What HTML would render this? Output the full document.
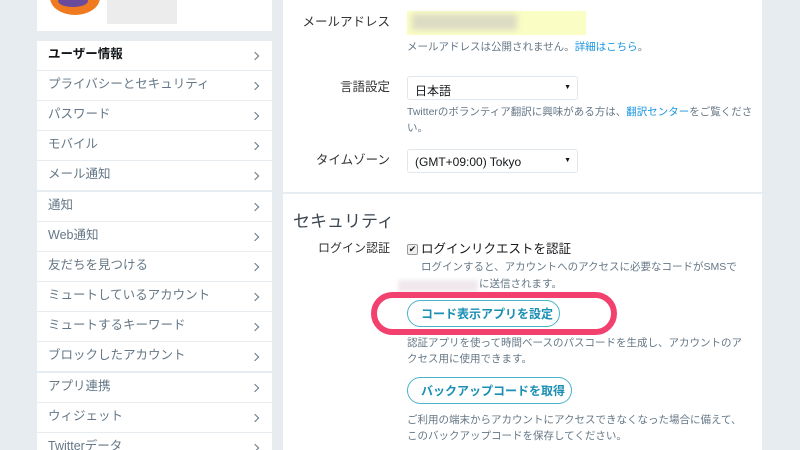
<!DOCTYPE html>
<html><head><meta charset="utf-8"><style>
*{margin:0;padding:0;box-sizing:border-box}
html,body{width:800px;height:450px;overflow:hidden}
body{background:#e6ecf0;font-family:"Liberation Sans","Noto Sans CJK JP",sans-serif;position:relative;color:#14171a}
.abs{position:absolute}
.card{background:#fff}
.row{position:absolute;left:37px;width:235px;height:29px;background:#fff;font-size:12.5px;line-height:16px;color:#657786;padding:5px 0 0 11px}
.row b{color:#14171a}
.row:after{content:"";position:absolute;right:14px;top:12px;width:5px;height:5px;border-right:1.5px solid #657786;border-top:1.5px solid #657786;transform:rotate(45deg)}
.lbl{position:absolute;font-size:12.5px;line-height:16px;color:#333;text-align:right;right:410px}
.help{position:absolute;left:407px;font-size:10.5px;color:#657786;line-height:16px}
a{color:#1b95e0;text-decoration:none}
.sel{position:absolute;left:407px;width:171px;height:24px;border:1px solid #e1e8ed;border-radius:3px;background:#fff;font-size:12px;padding:5px 0 0 7px}
.sel:after{content:"▼";position:absolute;right:6px;top:7px;font-size:7px}
.btn{position:absolute;left:407px;height:27px;border:1px solid #4ab3c8;border-radius:14px;color:#1a8fb3;font-weight:bold;font-size:12px;line-height:14px;padding:6px 0 0 13px;background:#fff}
</style></head><body>
<div class="abs card" style="left:37px;top:0;width:235px;height:31px"></div>
<div class="abs" style="left:50px;top:-20px;width:50px;height:35px;border-radius:50%;background:#f07a20"></div>
<div class="abs" style="left:58px;top:-5px;width:30px;height:12px;background:#6a4a9a;border-radius:50%"></div>
<div class="abs" style="left:107px;top:0;width:70px;height:24px;background:#ececec"></div>
<div class="row" style="top:41px"><b>ユーザー情報</b></div>
<div class="row" style="top:71px">プライバシーとセキュリティ</div>
<div class="row" style="top:101px">パスワード</div>
<div class="row" style="top:131px">モバイル</div>
<div class="row" style="top:161px">メール通知</div>
<div class="row" style="top:192px">通知</div>
<div class="row" style="top:222px">Web通知</div>
<div class="row" style="top:252px">友だちを見つける</div>
<div class="row" style="top:282px">ミュートしているアカウント</div>
<div class="row" style="top:312px">ミュートするキーワード</div>
<div class="row" style="top:342px">ブロックしたアカウント</div>
<div class="row" style="top:373px">アプリ連携</div>
<div class="row" style="top:403px">ウィジェット</div>
<div class="row" style="top:433px">Twitterデータ</div>

<div class="abs card" style="left:283px;top:0;width:479px;height:192px"></div>
<div class="abs card" style="left:283px;top:194px;width:479px;height:256px"></div>
<div class="lbl" style="top:14px">メールアドレス</div>
<div class="abs" style="left:407px;top:11px;width:179px;height:24px;background:#fafdc4"></div>
<div class="abs" style="left:412px;top:14px;width:105px;height:16px;background:#dcdcc4;filter:blur(3px)"></div>
<div class="help" style="top:39px">メールアドレスは公開されません。<a>詳細はこちら</a>。</div>
<div class="lbl" style="top:79px">言語設定</div>
<div class="sel" style="top:76px">日本語</div>
<div class="help" style="top:104px;width:350px">Twitterのボランティア翻訳に興味がある方は、<a>翻訳センター</a>をご覧ください。</div>
<div class="lbl" style="top:152px">タイムゾーン</div>
<div class="sel" style="top:149px">(GMT+09:00) Tokyo</div>

<div class="abs" style="left:293px;top:207px;font-size:17px;color:#3a4550">セキュリティ</div>
<div class="lbl" style="top:240px;font-size:12px">ログイン認証</div>
<div class="abs" style="left:407px;top:244px;width:11px;height:11px;border:1px solid #999;border-radius:2px;background:#eee;font-size:9px;line-height:9px;text-align:center">✔</div>
<div class="abs" style="left:421px;top:238px;font-size:12.5px">ログインリクエストを認証</div>
<div class="help" style="top:259px;left:421px">ログインすると、アカウントへのアクセスに必要なコードがSMSで</div>
<div class="abs" style="left:398px;top:280px;width:80px;height:12px;background:#f0e8ec;filter:blur(2px)"></div>
<div class="help" style="top:276px;left:479px">に送信されます。</div>
<div class="abs" style="left:371px;top:292px;width:246px;height:43px;border:6px solid #f3416f;border-radius:22px"></div>
<div class="btn" style="top:300px;width:153px">コード表示アプリを設定</div>
<div class="help" style="top:335px;width:335px">認証アプリを使って時間ベースのパスコードを生成し、アカウントのアクセス用に使用できます。</div>
<div class="btn" style="top:377px;width:165px">バックアップコードを取得</div>
<div class="help" style="top:412px;width:340px">ご利用の端末からアカウントにアクセスできなくなった場合に備えて、このバックアップコードを保存してください。</div>
</body></html>
